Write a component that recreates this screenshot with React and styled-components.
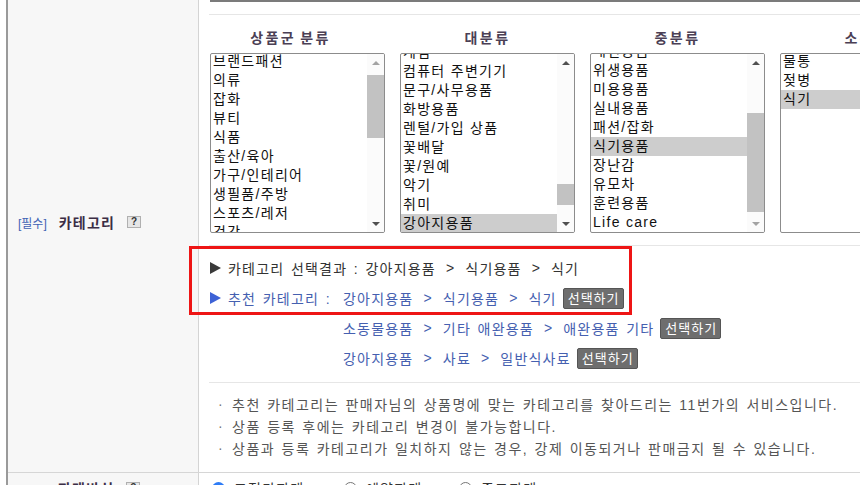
import React from 'react';
import styled, { createGlobalStyle } from 'styled-components';

const Global = createGlobalStyle`
  html, body { margin: 0; padding: 0; background: #fff; overflow: hidden; }
  body { font-family: "Liberation Sans", "Noto Sans CJK KR", sans-serif; }
`;

const Page = styled.div`
  width: 860px;
  height: 485px;
  overflow: hidden;
  padding-left: 6px;
  box-sizing: border-box;
`;

const Table = styled.div`
  border-left: 2px solid #9a9a9a;
  width: 1000px;
`;

const Row = styled.div`
  display: grid;
  grid-template-columns: 191px 1fr;
  border-bottom: 1px solid #d6d6d6;
`;

const LabelCell = styled.div`
  background: #f7f7f7;
  border-right: 1px solid #d4d4d4;
  box-sizing: border-box;
  padding: ${p => p.$pad};
  display: flex;
  align-items: flex-start;
`;

const LabelLine = styled.div`
  display: flex;
  align-items: center;
  height: 18px;
`;

const Required = styled.span`
  font-size: 12px;
  color: #4062b4;
  margin-right: 12px;
`;

const LabelText = styled.span`
  font-size: 14px;
  font-weight: bold;
  letter-spacing: 1.2px;
  color: #3b2d45;
`;

const Help = styled.span`
  margin-left: 12px;
  width: 14px;
  height: 12px;
  box-sizing: border-box;
  border: 1px solid #b0b0b0;
  background: #e6e6e6;
  font-size: 10px;
  font-weight: bold;
  color: #333;
  display: flex;
  align-items: center;
  justify-content: center;
  line-height: 1;
`;

const ContentCell = styled.div`
  padding: ${p => p.$pad || '0 0 0 11px'};
  background: #fff;
`;

const TopRule = styled.div`
  height: 2px;
  background: #7b7b7b;
`;

const Divider = styled.div`
  height: 1px;
  background: #e6e6e6;
  margin-top: ${p => p.$mt}px;
  margin-left: -1px;
`;

const Columns = styled.div`
  display: grid;
  grid-template-columns: repeat(4, 175px);
  column-gap: 15px;
  margin-top: ${p => p.$mt}px;
`;

const ColHead = styled.div`
  text-align: center;
  font-size: 14px;
  font-weight: bold;
  letter-spacing: 2.4px;
  word-spacing: -2px;
  color: #4b3f55;
  line-height: 18px;
  padding-right: ${p => p.$shift || 0}px;
`;

const ListBox = styled.div`
  height: 180px;
  box-sizing: border-box;
  border: 1px solid #8c8c8c;
  border-radius: 2px;
  background: #fff;
  display: flex;
  overflow: hidden;
`;

const Options = styled.div`
  flex: 1;
  overflow: hidden;
  min-width: 0;
`;

const OptionList = styled.div`
  margin-top: ${p => -p.$offset}px;
`;

const Option = styled.div`
  height: 19px;
  line-height: 19px;
  font-size: 14px;
  letter-spacing: 1.3px;
  padding-left: 2px;
  white-space: nowrap;
  color: #111;
  background: ${p => (p.$sel ? '#cdcdcd' : 'transparent')};
`;

const ScrollBar = styled.div`
  width: 17px;
  display: flex;
  flex-direction: column;
  background: #fbfbfb;
`;

const ScrollBtn = styled.div`
  height: 17px;
  display: flex;
  align-items: center;
  justify-content: center;
`;

const Arrow = styled.span`
  width: 0;
  height: 0;
  border-left: 4px solid transparent;
  border-right: 4px solid transparent;
  ${p => (p.$down ? 'border-top' : 'border-bottom')}: 4px solid ${p => p.$color};
`;

const Track = styled.div`
  flex: 1;
  position: relative;
`;

const Thumb = styled.div`
  position: absolute;
  left: 0;
  right: 0;
  top: ${p => p.$top}px;
  height: ${p => p.$h}px;
  background: #c2c2c2;
`;

const Results = styled.div`
  position: relative;
  padding-top: 11px;
  display: flex;
  flex-direction: column;
  gap: 8px;
`;

const ResultRow = styled.div`
  display: flex;
  align-items: center;
  height: 22px;
  font-size: 14px;
  letter-spacing: 1.2px;
  word-spacing: 1.5px;
  color: ${p => p.$color};
  white-space: nowrap;
`;

const Tri = styled.span`
  width: 0;
  height: 0;
  border-top: 6px solid transparent;
  border-bottom: 6px solid transparent;
  border-left: 11px solid ${p => p.$color};
  margin-right: 7px;
  flex: none;
`;

const RecBlock = styled.div`
  display: flex;
  align-items: flex-start;
`;

const RecLabel = styled(ResultRow)`
  width: 133px;
  flex: none;
`;

const RecList = styled.div`
  display: flex;
  flex-direction: column;
  gap: 8px;
`;

const Sep = styled.span`
  margin: 0 10px;
`;

const SelectBtn = styled.span`
  margin-left: 6px;
  height: 21px;
  box-sizing: border-box;
  padding: 0 3px 0 4px;
  background: #6e6e6e;
  border: 1px solid #555;
  border-radius: 2px;
  color: #fff;
  font-size: 13px;
  letter-spacing: 1px;
  line-height: 19px;
  display: inline-flex;
  align-items: center;
`;

const Annotation = styled.div`
  position: absolute;
  top: 0;
  left: -21px;
  width: 443px;
  height: 69px;
  box-sizing: border-box;
  border: 3px solid #ee1515;
  pointer-events: none;
`;

const Notices = styled.ul`
  list-style: none;
  margin: 0;
  padding: 10px 0 13px 8px;
`;

const Notice = styled.li`
  display: flex;
  align-items: center;
  height: 22px;
  font-size: 14px;
  letter-spacing: 1.5px;
  word-spacing: 1px;
  color: #555;
  white-space: nowrap;
`;

const Bullet = styled.span`
  width: 14px;
  flex: none;
  letter-spacing: 0;
  color: #777;
`;

const RadioGroup = styled.div`
  display: flex;
  align-items: center;
  height: 18px;
`;

const RadioItem = styled.label`
  display: flex;
  align-items: center;
  width: ${p => p.$w}px;
  font-size: 14px;
  letter-spacing: 1.2px;
  color: #333;
`;

const RadioDot = styled.span`
  width: 13px;
  height: 13px;
  box-sizing: border-box;
  border-radius: 50%;
  border: ${p => (p.$on ? '4px solid #2e7cf6' : '1px solid #767676')};
  background: #fff;
  margin-right: 9px;
`;

const lists = [
  {
    head: '상품군 분류',
    shift: 14,
    offset: 2,
    items: ['브랜드패션', '의류', '잡화', '뷰티', '식품', '출산/육아', '가구/인테리어', '생필품/주방', '스포츠/레저', '건강', '디지털/가전'],
    sel: -1,
    bar: { top: 4, h: 63, up: '#a3a3a3', down: '#505050' },
  },
  {
    head: '대분류',
    offset: 11,
    items: ['게임', '컴퓨터 주변기기', '문구/사무용품', '화방용품', '렌털/가입 상품', '꽃배달', '꽃/원예', '악기', '취미', '강아지용품', '고양이용품'],
    sel: 9,
    bar: { top: 113, h: 21, up: '#505050', down: '#505050' },
  },
  {
    head: '중분류',
    offset: 12,
    items: ['배변용품', '위생용품', '미용용품', '실내용품', '패션/잡화', '식기용품', '장난감', '유모차', '훈련용품', 'Life care'],
    sel: 5,
    bar: { top: 42, h: 99, up: '#505050', down: '#a3a3a3' },
  },
  {
    head: '소분류',
    offset: 2,
    items: ['물통', '젖병', '식기'],
    sel: 2,
    bar: null,
  },
];

const recs = [
  ['강아지용품', '식기용품', '식기'],
  ['소동물용품', '기타 애완용품', '애완용품 기타'],
  ['강아지용품', '사료', '일반식사료'],
];

function Path({ parts }) {
  return parts.map((p, i) => (
    <React.Fragment key={i}>
      {i > 0 && <Sep>&gt;</Sep>}
      <span>{p}</span>
    </React.Fragment>
  ));
}

function Select({ data }) {
  return (
    <ListBox>
      <Options>
        <OptionList $offset={data.offset}>
          {data.items.map((it, i) => (
            <Option key={it} $sel={i === data.sel}>{it}</Option>
          ))}
        </OptionList>
      </Options>
      {data.bar && (
        <ScrollBar>
          <ScrollBtn><Arrow $color={data.bar.up} /></ScrollBtn>
          <Track><Thumb $top={data.bar.top} $h={data.bar.h} /></Track>
          <ScrollBtn><Arrow $down $color={data.bar.down} /></ScrollBtn>
        </ScrollBar>
      )}
    </ListBox>
  );
}

export default function App() {
  return (
    <Page>
      <Global />
      <Table>
        <Row>
          <LabelCell $pad="213px 0 0 10px">
            <LabelLine>
              <Required>[필수]</Required>
              <LabelText>카테고리</LabelText>
              <Help>?</Help>
            </LabelLine>
          </LabelCell>
          <ContentCell>
            <TopRule />
            <Divider $mt={12} />
            <Columns $mt={14}>
              {lists.map(l => (
                <ColHead key={l.head} $shift={l.shift}>{l.head}</ColHead>
              ))}
            </Columns>
            <Columns $mt={6}>
              {lists.map(l => (
                <Select key={l.head} data={l} />
              ))}
            </Columns>
            <Divider $mt={12} />
            <Results>
              <ResultRow $color="#333">
                <Tri $color="#3a3a3a" />
                <span>카테고리 선택결과 :&nbsp;</span>
                <Path parts={['강아지용품', '식기용품', '식기']} />
              </ResultRow>
              <RecBlock>
                <RecLabel $color="#4560b0">
                  <Tri $color="#3d62d6" />
                  <span>추천 카테고리 :</span>
                </RecLabel>
                <RecList>
                  {recs.map((r, i) => (
                    <ResultRow key={i} $color="#4560b0">
                      <Path parts={r} />
                      <SelectBtn>선택하기</SelectBtn>
                    </ResultRow>
                  ))}
                </RecList>
              </RecBlock>
              <Annotation />
            </Results>
            <Divider $mt={13} />
            <Notices>
              <Notice><Bullet>·</Bullet>추천 카테고리는 판매자님의 상품명에 맞는 카테고리를 찾아드리는 11번가의 서비스입니다.</Notice>
              <Notice><Bullet>·</Bullet>상품 등록 후에는 카테고리 변경이 불가능합니다.</Notice>
              <Notice><Bullet>·</Bullet>상품과 등록 카테고리가 일치하지 않는 경우, 강제 이동되거나 판매금지 될 수 있습니다.</Notice>
            </Notices>
          </ContentCell>
        </Row>
        <Row>
          <LabelCell $pad="6px 0 20px 50px">
            <LabelLine>
              <LabelText>판매방식</LabelText>
              <Help>?</Help>
            </LabelLine>
          </LabelCell>
          <ContentCell $pad="6px 0 20px 13px">
            <RadioGroup>
              <RadioItem $w={132}><RadioDot $on />고정가판매</RadioItem>
              <RadioItem $w={115}><RadioDot />예약판매</RadioItem>
              <RadioItem $w={120}><RadioDot />중고판매</RadioItem>
            </RadioGroup>
          </ContentCell>
        </Row>
      </Table>
    </Page>
  );
}
